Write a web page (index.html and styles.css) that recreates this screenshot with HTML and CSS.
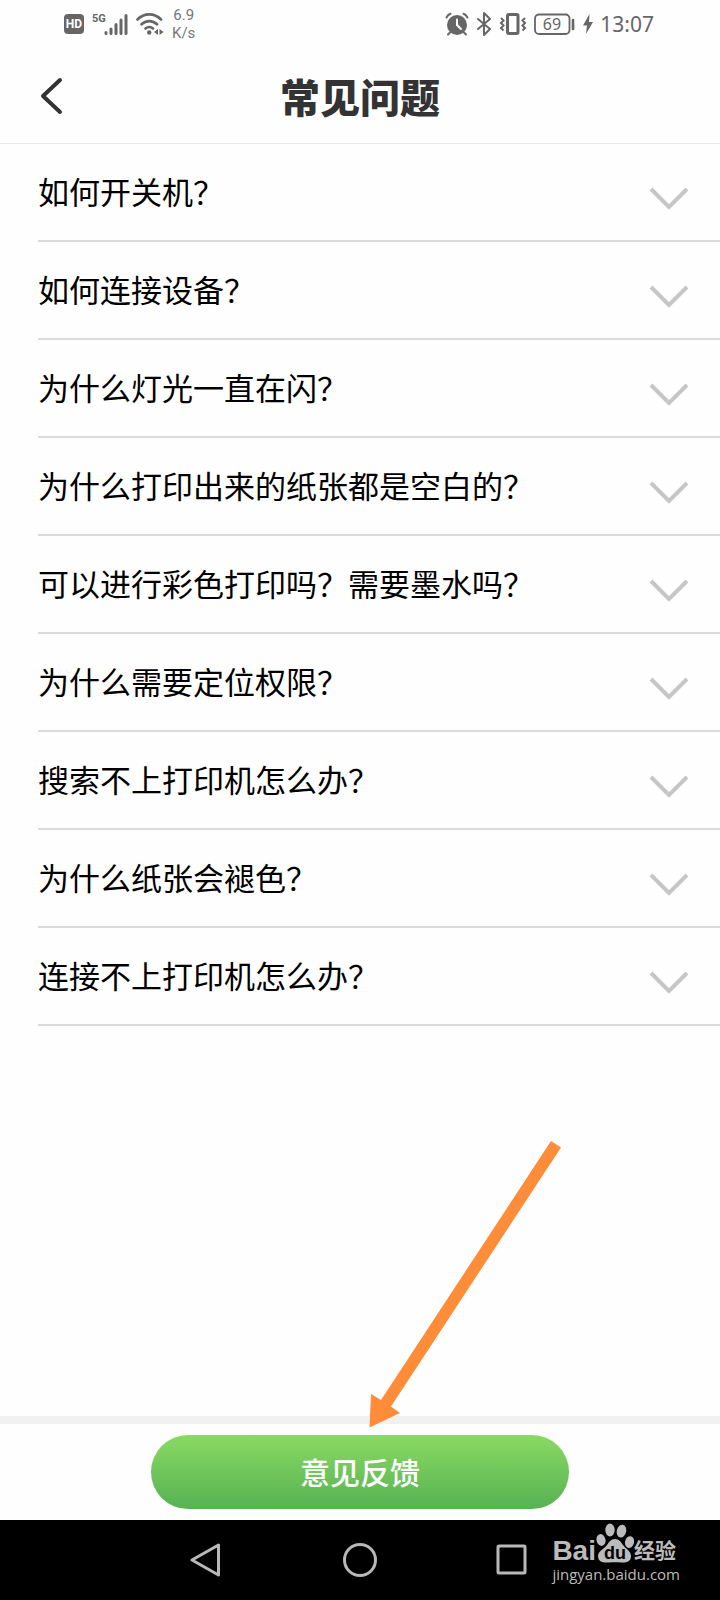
FILE: index.html
```html
<!DOCTYPE html>
<html lang="zh-CN">
<head>
    <meta charset="UTF-8">
    <meta name="viewport" content="width=device-width, initial-scale=1.0">
    <title>常见问题</title>
    <link rel="stylesheet" href="styles.css">
</head>
<body>
    <!-- status bar -->
    <div class="statusBar">
        <div class="statusLeft">
            <svg width="20" height="20" viewBox="0 0 20 20">
                <rect width="20" height="20" rx="4" fill="#666"/>
                <text x="10" y="14" text-anchor="middle" class="hdText">HD</text>
            </svg>
            <svg width="36" height="24" viewBox="0 0 36 24">
                <text x="0" y="10" class="netText">5G</text>
                <path d="M14 20.500V21.500M19 17V21.500M24 12.500V21.500M29 8V21.500M34 3.500V21.500" stroke="#666" stroke-width="3" stroke-linecap="round"/>
            </svg>
            <svg width="28" height="24" viewBox="0 0 28 24" fill="none" stroke="#666" stroke-width="2.600" stroke-linecap="round">
                <path d="M1.500 7.500C8 .700 18.500 .700 25 7.500M5.500 12.300c4.500-4.300 11-4.300 15.500 0M9.500 16.500c2.200-2 5.300-2 7.500 0"/>
                <circle cx="13.200" cy="20.500" r="2.200" fill="#666" stroke="none"/>
                <path d="M22 17v6l-4-3zM23.500 17v6l4-3z" fill="#666" stroke="none"/>
            </svg>
            <div class="speed"><span>6.9</span><span>K/s</span></div>
        </div>
        <div class="statusRight">
            <svg width="24" height="24" viewBox="0 0 24 24" fill="none" stroke="#666" stroke-width="2" stroke-linecap="round">
                <circle cx="12" cy="13" r="10" fill="#666" stroke="none"/>
                <path d="M1.500 5.500C2.500 3.500 3.500 2.500 5.500 1.800M22.500 5.500C21.500 3.500 20.500 2.500 18.500 1.800M5 20.500l-2 2M19 20.500l2 2"/>
                <path d="M12 7.500V13l4 4" stroke="#fff"/>
            </svg>
            <svg width="16" height="24" viewBox="0 0 16 24" fill="none" stroke="#666" stroke-width="2" stroke-linejoin="round" stroke-linecap="round">
                <path d="M2 7l12 10-6 6V1l6 6L2 17"/>
            </svg>
            <svg width="28" height="24" viewBox="0 0 28 24" fill="none" stroke="#666">
                <rect x="8.500" y="2.500" width="10.500" height="19" rx="1.500" stroke-width="3"/>
                <path d="M2 6l2.500 2.500L2 11l2.500 2.500L2 16l2.500 2.500M26 6l-2.500 2.500L26 11l-2.500 2.500L26 16l-2.500 2.500" stroke-width="2"/>
            </svg>
            <svg width="42" height="24" viewBox="0 0 42 24">
                <rect x="1" y="2.500" width="34.500" height="19.500" rx="4" fill="none" stroke="#666" stroke-width="1.800"/>
                <path d="M39 8v9" stroke="#666" stroke-width="2.600" stroke-linecap="round"/>
                <text x="18" y="17.500" text-anchor="middle" class="batteryText">69</text>
            </svg>
            <svg width="10" height="24" viewBox="0 0 10 24"><path d="M6.500 2L0 13.500h4L3 22l7-12H6z" fill="#666"/></svg>
            <span class="time">13:07</span>
        </div>
    </div>

    <header class="header">
        <button class="backButton" aria-label="返回">
            <svg width="24" height="38" viewBox="0 0 24 38" fill="none" stroke="#333" stroke-width="4" stroke-linecap="round" stroke-linejoin="round">
                <path d="M20 3L3 19l17 16"/>
            </svg>
        </button>
        <h1>常见问题</h1>
    </header>

    <!-- list of questions -->
    <main class="questions">
        <button class="question" aria-expanded="false">
            <span>如何开关机？</span>
            <svg class="arrowDown" viewBox="0 0 38 22"><path d="M1 1l18 18L37 1"/></svg>
        </button>
        <button class="question" aria-expanded="false">
            <span>如何连接设备？</span>
            <svg class="arrowDown" viewBox="0 0 38 22"><path d="M1 1l18 18L37 1"/></svg>
        </button>
        <button class="question" aria-expanded="false">
            <span>为什么灯光一直在闪？</span>
            <svg class="arrowDown" viewBox="0 0 38 22"><path d="M1 1l18 18L37 1"/></svg>
        </button>
        <button class="question" aria-expanded="false">
            <span>为什么打印出来的纸张都是空白的？</span>
            <svg class="arrowDown" viewBox="0 0 38 22"><path d="M1 1l18 18L37 1"/></svg>
        </button>
        <button class="question" aria-expanded="false">
            <span>可以进行彩色打印吗？需要墨水吗？</span>
            <svg class="arrowDown" viewBox="0 0 38 22"><path d="M1 1l18 18L37 1"/></svg>
        </button>
        <button class="question" aria-expanded="false">
            <span>为什么需要定位权限？</span>
            <svg class="arrowDown" viewBox="0 0 38 22"><path d="M1 1l18 18L37 1"/></svg>
        </button>
        <button class="question" aria-expanded="false">
            <span>搜索不上打印机怎么办？</span>
            <svg class="arrowDown" viewBox="0 0 38 22"><path d="M1 1l18 18L37 1"/></svg>
        </button>
        <button class="question" aria-expanded="false">
            <span>为什么纸张会褪色？</span>
            <svg class="arrowDown" viewBox="0 0 38 22"><path d="M1 1l18 18L37 1"/></svg>
        </button>
        <button class="question" aria-expanded="false">
            <span>连接不上打印机怎么办？</span>
            <svg class="arrowDown" viewBox="0 0 38 22"><path d="M1 1l18 18L37 1"/></svg>
        </button>
    </main>

    <footer class="footer">
        <button class="feedback">意见反馈</button>
        <svg class="pointer" width="240" height="320" viewBox="0 0 240 320">
            <path d="M211 21L221 27.500 51 286.500 60 293 29.500 307.500 31 274 41 280z" fill="#ff8c39"/>
        </svg>
    </footer>

    <!-- system navigation -->
    <nav class="navBar">
        <button aria-label="后退">
            <svg width="34" height="34" viewBox="0 0 34 34"><path d="M28.500 2v30L2 17z"/></svg>
        </button>
        <button aria-label="主页">
            <svg width="34" height="34" viewBox="0 0 34 34"><circle cx="17" cy="17" r="15.500"/></svg>
        </button>
        <button aria-label="最近">
            <svg width="34" height="34" viewBox="0 0 34 34"><rect x="2" y="3" width="27" height="27" rx="1"/></svg>
        </button>
        <div class="watermark">
            <div class="logo">
                <span class="bai">Bai</span>
                <svg width="38" height="42" viewBox="0 0 38 42">
                    <g fill="#bbb">
                        <ellipse cx="5" cy="18" rx="4.500" ry="6" transform="rotate(-12 5 18)"/>
                        <ellipse cx="14" cy="8" rx="4.700" ry="6.500"/>
                        <ellipse cx="25.500" cy="9" rx="4.700" ry="6.500" transform="rotate(12 25 9)"/>
                        <ellipse cx="33.500" cy="20" rx="4.500" ry="6" transform="rotate(12 33 20)"/>
                        <path d="M19 17c4 0 6 3 8 6 3 4 8 6 8 11 0 6-5 7-10 6.500-4-.500-8-.500-12 0C7 41 2 40 2 34c0-5 6-7 9-11 2-3 4-6 8-6z"/>
                    </g>
                    <text x="19" y="37" text-anchor="middle" class="duText">du</text>
                </svg>
                <span class="jingyan">经验</span>
            </div>
            <div class="site">jingyan.baidu.com</div>
        </div>
    </nav>
</body>
</html>
```

FILE: styles.css
```css
* {
    box-sizing: border-box;
}

body {
    margin: 0;
    min-height: 100vh;
    display: flex;
    flex-direction: column;
    background-color: #fefefe;
    font-family: "Noto Sans CJK SC", sans-serif;
}

button {
    border: none;
    background: none;
    padding: 0;
    font-family: inherit;
    cursor: pointer;
}

svg {
    display: block;
    flex-shrink: 0;
}

/* status bar */
.statusBar {
    height: 48px;
    padding: 0 66px 0 64px;
    display: flex;
    justify-content: space-between;
    align-items: center;
    color: #666;
    font-family: "Noto Sans", sans-serif;
}

.statusLeft {
    display: flex;
    align-items: center;
    gap: 8px;
}

.statusRight {
    display: flex;
    align-items: center;
    gap: 7px;
}

.hdText {
    font: bold 12px Roboto, sans-serif;
    fill: #fff;
}

.netText {
    font: bold 11px Roboto, sans-serif;
    fill: #666;
}

.batteryText {
    font: 16px "Noto Sans", sans-serif;
    fill: #666;
}

.speed {
    display: flex;
    flex-direction: column;
    align-items: center;
    font: 15px/18px Roboto, sans-serif;
    color: #777;
}

.time {
    font-size: 21px;
    line-height: 24px;
}

/* title */
.header {
    height: 96px;
    padding: 0 40px;
    display: grid;
    grid-template-columns: 24px 1fr 24px;
    align-items: center;
    border-bottom: 1px solid #e8e8e8;
}

.header h1 {
    margin: 0;
    text-align: center;
    font-size: 40px;
    line-height: 48px;
    font-weight: 900;
    color: #333;
}

/* questions */
.questions {
    flex: 1;
    padding-left: 38px;
}

.question {
    width: 100%;
    height: 98px;
    padding: 0 32px 2px 0;
    display: flex;
    justify-content: space-between;
    align-items: center;
    border-bottom: 2px solid #dadada;
    font-size: 31px;
    line-height: 40px;
    color: #000;
    text-align: left;
}

.arrowDown {
    width: 38px;
    height: 22px;
    margin-top: 16px;
    fill: none;
    stroke: #c6c6c6;
    stroke-width: 4;
    overflow: visible;
}

/* feedback */
.footer {
    position: relative;
    padding: 11px 0;
    display: flex;
    justify-content: center;
    border-top: 8px solid #f1f1f1;
    background-color: #fefefe;
}

.feedback {
    width: 58%;
    height: 74px;
    padding-bottom: 2px;
    border-radius: 37px;
    background: linear-gradient(#8ada63, #57b253);
    color: #fff;
    font-size: 30px;
    line-height: 40px;
    font-weight: 500;
}

.pointer {
    position: absolute;
    left: calc(50% - 20px);
    bottom: 80px;
    pointer-events: none;
}

/* bottom navigation */
.navBar {
    position: relative;
    height: 80px;
    display: flex;
    justify-content: center;
    align-items: center;
    gap: 119px;
    background-color: #000;
}

.navBar button svg {
    fill: none;
    stroke: #b8b8b8;
    stroke-width: 3;
    stroke-linejoin: round;
}

.watermark {
    position: absolute;
    right: 40px;
    bottom: 16px;
    color: #bbb;
}

.logo {
    display: flex;
    align-items: flex-end;
}

.bai {
    font: bold 28px/26px "Liberation Sans", sans-serif;
}

.jingyan {
    font-size: 21px;
    line-height: 30px;
    font-weight: bold;
}

.duText {
    font: bold 18px "Liberation Sans", sans-serif;
    fill: #000;
}

.site {
    font: 15px/20px "Open Sans", sans-serif;
}
```
